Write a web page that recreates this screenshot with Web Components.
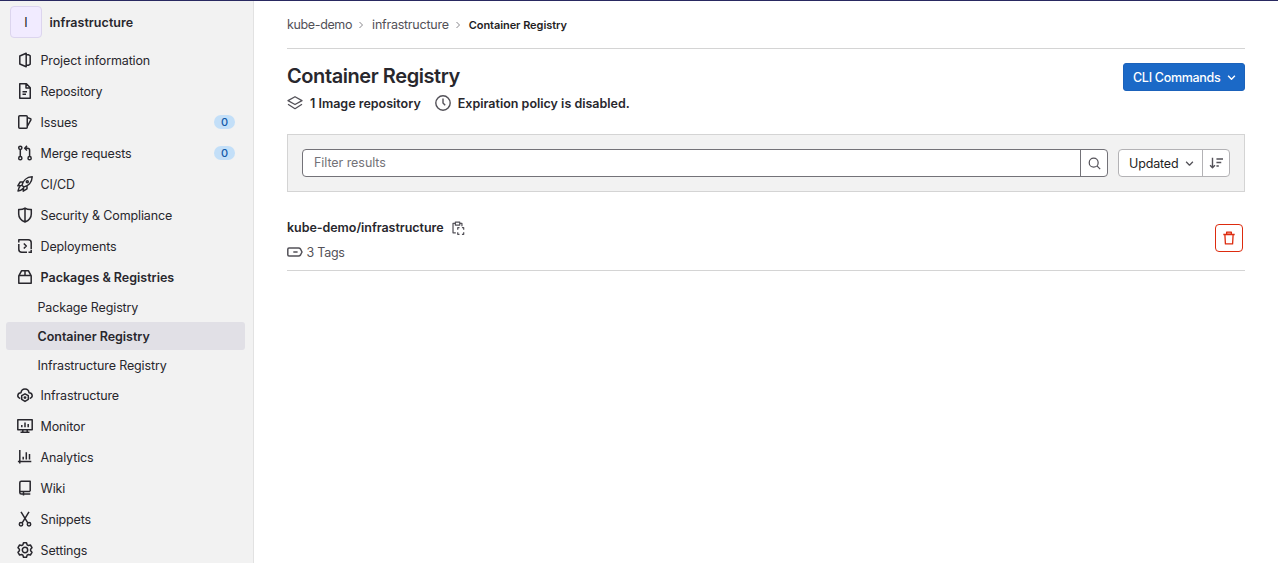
<!DOCTYPE html>
<html lang="en">
<head>
<meta charset="utf-8">
<title>Container Registry</title>
<style>
html,body{margin:0;height:100%;overflow:hidden;background:#fff}
body{font-family:Inter,"Liberation Sans",sans-serif;font-size:12.5px;color:#28272d}
</style>
</head>
<body>
<registry-app></registry-app>
<script>
const ICONS = {
  project: '<path d="M2.8 4 9.2 1.200v13.600L2.800 12zM9.200 2.800h2.500l1.500 1v8.400l-1.500 1H9.200" />',
  doc: '<path d="M2.75.8h6.7l3.8 3.9v10.5H2.75zM9 1v4h4M5.5 8.8H10M5.5 11.3H9"/>',
  issues: '<rect x="1.75" y="1.75" width="8.5" height="12.5" rx="1"/><path d="M10.5 3.6l3 1.200q.7.300.4 1l-3.400 6.200"/>',
  merge: '<circle cx="3.3" cy="2.8" r="1.6"/><circle cx="3.3" cy="13.2" r="1.6"/><circle cx="12.6" cy="13.2" r="1.6"/><path d="M3.3 4.5v7M12.6 11.5V5.2q0-2-2-2H8M10 .9 7.7 3.2 10 5.5"/>',
  rocket: '<path d="M5 9.2C6 5 9.500 1 15.200.8 15 6.500 11 10 6.800 11zM6 6H3.200L.8 9.800l3.700-.4M10 10v2.800l-3.800 2.400.4-3.700M3.700 9.700C2 11 1.200 12.800 1 15c2.200-.2 3.800-1 5.300-2.700"/><circle cx="10.300" cy="5.700" r="1"/>',
  shield: '<path d="M8 1.100C6 2.300 3.800 2.700 1.700 2.500V7c0 4 2.800 6.600 6.300 8 3.500-1.400 6.300-4 6.300-8V2.500C12.200 2.700 10 2.300 8 1.100zM8 1.200V15"/>',
  deploy: '<path d="M1.800 4.500V1.800h9.400q3 0 3 3v6.400M14.950 14.200H11.500M14.200 12v2.200M10 14.200H4.800q-3 0-3-3V6M6.800 5.500 9.300 8l-2.500 2.500"/>',
  package: '<path d="M1.800 6.800 4.500 1.800h7l2.700 5v7.400H1.800zM1.800 6.500h12.400M8 2v4.500"/>',
  cloud: '<path d="M3.300 11.500C-.5 10.500.3 5.800 4 5.800 4.500.6 11.500.6 12 5.800c3.700 0 4.500 4.700.7 5.700"/><path d="M8 6.800 11.300 8.700v3.700L8 14.400l-3.300-2V8.700z"/><circle cx="8" cy="10.600" r=".7"/>',
  monitor: '<path d="M.8 1.800h14.400v9.900H.8zM5.800 12v2.200M10.200 12v2.200M3.500 14.300h9M4.800 7v2.200M8 4.500v4.700M11.200 6v3.200"/>',
  chart: '<path d="M2.800 1v13.500M.9 12.500h13.400M6.200 7.700v2.800M9.300 3.200v7.300M12.500 5v5.500"/>',
  book: '<path d="M13.200 11.200V1.200H4.300q-1.500 0-1.500 1.500v9.800q0 1.500 1.500 1.500h9M3 11.500h10.200M6.500 11.700v3.800"/>',
  snippet: '<circle cx="4" cy="13.300" r="1.700"/><circle cx="12" cy="13.300" r="1.700"/><path d="M4 .8l6.800 11M12 .8 5.200 11.800"/>',
  gear: '<path d="M6.500.8h3l.6 2 1.300.7 2-.5 1.600 2.700L13.600 7.200v1.600L15 10.300 13.400 13l-2-.5-1.300.7-.6 2h-3l-.6-2-1.300-.7-2 .5L1 10.300l1.400-1.500V7.200L1 5.700 2.600 3l2 .5 1.300-.7z"/><circle cx="8" cy="8" r="2.700"/>',
  layers: '<path d="M8 1.700 15 5.600 8 9.500 1 5.600zM1 9.200l7 4.500 7-4.500"/>',
  clock: '<circle cx="8" cy="8" r="7.200"/><path d="M8 3.500V8l2.200 2.200"/>',
  search: '<circle cx="7" cy="7" r="5.500"/><path d="m11 11 4 4"/>',
  sort: '<path d="M4 2v11.500M1.200 10.700 4 13.500l2.800-2.800M8.500 3.500H16M8.500 7.500H14M8.500 11.500h2.700"/>',
  down: '<path d="M2 5 8 11 14 5"/>',
  right: '<path d="M5 2 11 8 5 14"/>',
  copy: '<path d="M5.500 13.500H2.300V2.700H5M10 2.700h2.500V6M5 1.200h5v3.500H5zM7.700 10V7.600h2M12.500 7.600h2V10M14.500 12.800v2.400h-2M9.700 15.200h-2v-2.400"/>',
  label: '<path d="M2 4h9.500q1.300 0 2 1l1.500 3-1.500 3q-.7 1-2 1H2Q.8 12 .8 10.800V5.200Q.8 4 2 4zM6.300 8h4.300"/>',
  trash: '<path fill="#f7c9c3" d="M5.300 1.200h5.400v2.600H5.300z"/><path d="M1.500 4h13M3.300 4l.6 10.800h8.200L12.700 4"/>'
};

const define = (name, css, html) => customElements.define(name, class extends HTMLElement {
  constructor() {
    super();
    const t = document.createElement('template');
    t.innerHTML = '<style>' + css + '</style>' + html;
    this.attachShadow({ mode: 'open' }).append(t.content.cloneNode(true));
  }
});

class UiIcon extends HTMLElement {
  connectedCallback() {
    if (this.shadowRoot) return;
    const s = this.getAttribute('size') || 16, w = this.getAttribute('weight') || 1.5;
    this.attachShadow({ mode: 'open' }).innerHTML =
      `<style>:host{display:block;flex:none;width:${s}px;height:${s}px}svg{display:block}</style>
       <svg width="${s}" height="${s}" viewBox="0 0 16 16" fill="none" stroke="currentColor" stroke-width="${w}" stroke-linejoin="round">${ICONS[this.getAttribute('name')]}</svg>`;
  }
}
customElements.define('ui-icon', UiIcon);

class NavItem extends HTMLElement {
  connectedCallback() {
    if (this.shadowRoot) return;
    const badge = this.getAttribute('badge');
    this.attachShadow({ mode: 'open' }).innerHTML =
      `<style>
        :host{display:flex;box-sizing:border-box;height:31px;padding:7px 18px 8px 17px;align-items:flex-start;color:#28272d}
        span{margin-left:7.500px;line-height:17px;letter-spacing:-.13px}
        :host([bold]) span{font-weight:600;letter-spacing:0}
        b{margin:0 0 0 auto;width:21px;height:14px;border-radius:7px;background:#c3dff8;color:#1259a8;font-size:11px;line-height:14px;font-weight:500;text-align:center;position:relative;top:1px}
      </style>
      <ui-icon name="${this.getAttribute('icon')}"></ui-icon><span><slot></slot></span>${badge ? `<b>${badge}</b>` : ''}`;
  }
}
customElements.define('nav-item', NavItem);

define('nav-subitem', `
  :host{display:block;height:28px;margin:0 8px 1px 6px;padding-left:31.500px;line-height:29px;border-radius:3px;letter-spacing:-.14px}
  :host([active]){background:#e1e0e6;font-weight:600;letter-spacing:-.03px}`, '<slot></slot>');

define('project-header', `
  :host{display:flex;align-items:center;height:32px;padding:5px 0 7px 10px;font-weight:600;letter-spacing:.04px}
  i{box-sizing:border-box;width:32px;height:32px;border:1px solid #dcd5ee;border-radius:4px;background:#f1ebff;color:#1f1e24;font-style:normal;font-weight:400;line-height:31px;text-align:center;margin-right:7.500px}`,
  '<i>I</i><slot></slot>');

define('side-bar', `
  :host{display:block;box-sizing:border-box;width:254px;flex:none;background:#f2f2f2;border-right:1px solid #e2e2e2;overflow:hidden}`, `
  <project-header>infrastructure</project-header>
  <nav-item icon="project">Project information</nav-item>
  <nav-item icon="doc">Repository</nav-item>
  <nav-item icon="issues" badge="0">Issues</nav-item>
  <nav-item icon="merge" badge="0">Merge requests</nav-item>
  <nav-item icon="rocket">CI/CD</nav-item>
  <nav-item icon="shield">Security &amp; Compliance</nav-item>
  <nav-item icon="deploy">Deployments</nav-item>
  <nav-item icon="package" bold>Packages &amp; Registries</nav-item>
  <nav-subitem>Package Registry</nav-subitem>
  <nav-subitem active>Container Registry</nav-subitem>
  <nav-subitem>Infrastructure Registry</nav-subitem>
  <nav-item icon="cloud">Infrastructure</nav-item>
  <nav-item icon="monitor">Monitor</nav-item>
  <nav-item icon="chart">Analytics</nav-item>
  <nav-item icon="book">Wiki</nav-item>
  <nav-item icon="snippet">Snippets</nav-item>
  <nav-item icon="gear">Settings</nav-item>`);

define('bread-crumbs', `
  :host{display:flex;align-items:center;height:47px;border-bottom:1px solid #d4d4d4;color:#535158}
  span{letter-spacing:-.24px}
  span:first-of-type{letter-spacing:-.36px}
  ui-icon{color:#89888d;margin:1px 7px 0 5px}
  b{font-size:11px;font-weight:600;color:#1f1e24;padding-top:1px;letter-spacing:-.06px}`, `
  <span>kube-demo</span><ui-icon name="right" size="8" weight="2"></ui-icon>
  <span>infrastructure</span><ui-icon name="right" size="8" weight="2"></ui-icon><b>Container Registry</b>`);

define('page-title', `
  :host{display:flex;justify-content:space-between;height:85px}
  h1{margin:14px 0 0;font-size:20px;line-height:26px;font-weight:600;letter-spacing:-.42px}
  .meta{display:flex;align-items:center;height:16px;margin-top:6px;font-weight:600}
  .meta ui-icon{color:#535158;margin-right:7px}
  .meta span+ui-icon{margin-left:14px}
  button{box-sizing:border-box;display:flex;align-items:center;justify-content:space-between;width:122px;height:28px;margin-top:14px;padding:0 8px 0 9px;border:1px solid #1b62bb;border-radius:3px;background:#1b69c7;color:#fff;font:500 12.500px Inter,sans-serif;letter-spacing:-.3px}`, `
  <div><h1>Container Registry</h1><div class="meta"><ui-icon name="layers" weight="1.3"></ui-icon><span>1 Image repository</span><ui-icon name="clock" weight="1.4"></ui-icon><span>Expiration policy is disabled.</span></div></div>
  <button><span>CLI Commands</span><ui-icon name="down" size="9" weight="2.5"></ui-icon></button>`);

define('filter-bar', `
  :host{display:flex;box-sizing:border-box;height:58px;padding:14px;border:1px solid #d4d4d4;background:#f2f2f2}
  .box{display:flex;box-sizing:border-box;height:28px;border:1px solid #737278;border-radius:4px;background:#fff;color:#535158;line-height:25px}
  .search{flex:1}
  .q{flex:1;padding-left:11px;color:#737278;letter-spacing:-.06px}
  .ic{display:flex;align-items:center;justify-content:center;width:26px;border-left:1px solid #737278}
  .sort{width:112px;margin-left:10px;border-color:#b3b2b5}
  .sort .ic{border-color:#b3b2b5}
  .u{flex:1;display:flex;align-items:center;justify-content:space-between;padding:0 8px 0 10px;color:#1f1e24;letter-spacing:-.16px}
  .u ui-icon{color:#535158}`, `
  <div class="box search"><div class="q">Filter results</div><div class="ic"><ui-icon name="search" size="13" weight="1.500"></ui-icon></div></div>
  <div class="box sort"><div class="u"><span>Updated</span><ui-icon name="down" size="9" weight="2.300"></ui-icon></div><div class="ic"><ui-icon name="sort" size="14" weight="1.600"></ui-icon></div></div>`);

define('image-row', `
  :host{display:flex;justify-content:space-between;height:78px;border-bottom:1px solid #d4d4d4}
  .name,.tags{display:flex;align-items:center;height:16px}
  .name{margin-top:27px;font-weight:600;letter-spacing:-.05px}
  .name ui-icon{margin:2px 0 0 7px;color:#535158}
  .tags{margin-top:9px;color:#535158;letter-spacing:-.25px}
  .tags ui-icon{margin-right:3.500px}
  button{box-sizing:border-box;display:flex;align-items:center;justify-content:center;width:28px;height:28px;margin:32px 2px 0 0;padding:0;border:1px solid #dd2b0e;border-radius:4px;background:#fff;color:#dd2b0e}`, `
  <div><div class="name"><span>kube-demo/infrastructure</span><ui-icon name="copy" size="14" weight="1.400"></ui-icon></div>
  <div class="tags"><ui-icon name="label" weight="1.500"></ui-icon><span>3 Tags</span></div></div>
  <button aria-label="Delete"><ui-icon name="trash" size="14" weight="1.500"></ui-icon></button>`);

define('registry-app', `
  :host{display:flex;box-sizing:border-box;height:563px;border-top:1px solid #292961}
  main{flex:1;min-width:0;padding:0 33px}`, `
  <side-bar></side-bar>
  <main><bread-crumbs></bread-crumbs><page-title></page-title><filter-bar></filter-bar><image-row></image-row></main>`);
</script>
</body>
</html>
